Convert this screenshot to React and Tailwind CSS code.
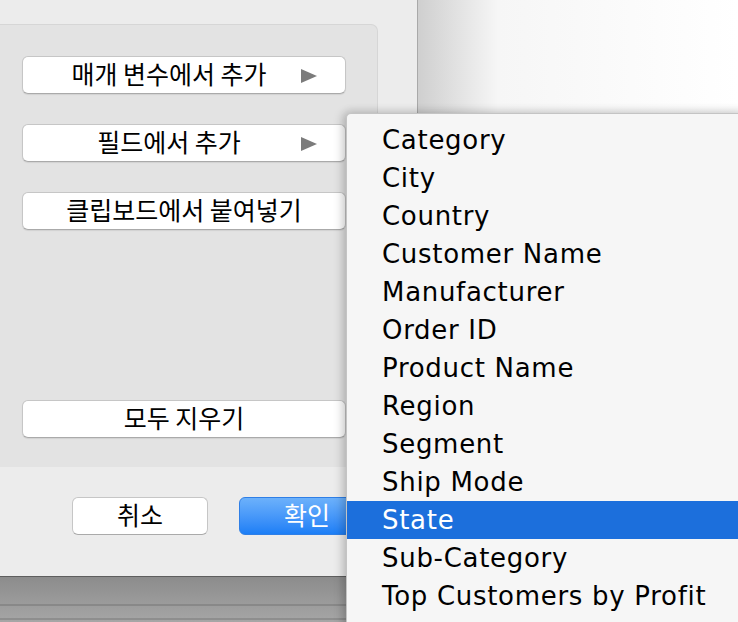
import React from "react";

const ko = { fontFamily: '"Noto Sans CJK KR", "Noto Sans", sans-serif' };
const menuFont = { fontFamily: '"DejaVu Sans", "Noto Sans", sans-serif' };

function Arrow() {
  return (
    <svg width="16" height="14" viewBox="0 0 16 14" className="absolute right-[28px] top-[12px]">
      <polygon points="0,0 16,7 0,14" fill="#7b7b7b" />
    </svg>
  );
}

function Btn({ label, arrow }) {
  return (
    <div className="relative h-[38px] w-[324px] rounded-[6px] border border-[#c6c6c6] border-b-[#aaaaaa] bg-white shadow-[0_1px_1px_rgba(0,0,0,0.08)] flex items-center">
      <div
        className={`text-[25px] leading-none text-black text-center pb-[3px] ${arrow ? "w-[292px]" : "w-full"}`}
        style={ko}
      >
        {label}
      </div>
      {arrow && <Arrow />}
    </div>
  );
}

const items = [
  "Category",
  "City",
  "Country",
  "Customer Name",
  "Manufacturer",
  "Order ID",
  "Product Name",
  "Region",
  "Segment",
  "Ship Mode",
  "State",
  "Sub-Category",
  "Top Customers by Profit",
];

export default function App() {
  return (
    <div className="relative w-[738px] h-[622px] overflow-hidden bg-white">
      <div className="flex h-[576px]">
        <div className="w-[418px] h-full bg-[#ececec] border-r border-[#a9a9a9] flex flex-col pt-[24px]">
          <div className="w-[378px] h-[443px] bg-[#e3e3e3] border-t border-r border-[#d6d6d6] rounded-tr-[7px] pl-[22px] pt-[31px] flex flex-col">
            <div className="flex flex-col gap-[30px]">
              <Btn label="매개 변수에서 추가" arrow />
              <Btn label="필드에서 추가" arrow />
              <Btn label="클립보드에서 붙여넣기" />
            </div>
            <div className="mt-[170px]">
              <Btn label="모두 지우기" />
            </div>
          </div>
          <div className="flex pl-[72px] pt-[30px] gap-[31px]">
            <div
              className="h-[38px] w-[136px] rounded-[6px] border border-[#c6c6c6] border-b-[#aaaaaa] bg-white flex items-center justify-center text-[25px] leading-none text-black pb-[3px]"
              style={ko}
            >
              취소
            </div>
            <div
              className="h-[38px] w-[136px] rounded-[6px] border border-[#2f7fe6] bg-gradient-to-b from-[#6cb1fb] to-[#1b7ef6] flex items-center justify-center text-[25px] leading-none text-white pb-[3px]"
              style={ko}
            >
              확인
            </div>
          </div>
        </div>
        <div className="flex-1 h-full bg-gradient-to-r from-[#cfcfcf] via-[#f6f6f6] via-[25%] to-white" />
      </div>
      <div className="h-[46px] border-t border-[#5e5e5e] bg-gradient-to-b from-[#8c8c8c] to-[#a6a6a6] flex flex-col">
        <div className="h-[27px]" />
        <div className="h-[2px] bg-[#888888]" />
        <div className="h-[12px]" />
        <div className="h-[2px] bg-[#8e8e8e]" />
      </div>

      <div
        className="absolute left-[346px] top-[113px] w-[400px] h-[520px] bg-[#f6f6f6] border-t border-l border-[#c4c4c4] rounded-tl-[5px] shadow-[-4px_0_10px_rgba(0,0,0,0.18),0_-3px_8px_rgba(0,0,0,0.08)] pt-[7px]"
        style={menuFont}
      >
        {items.map((it) => (
          <div
            key={it}
            className={`h-[38px] pl-[35px] flex items-center text-[26px] leading-none tracking-[0.7px] ${
              it === "State" ? "bg-[#1c6fdc] text-white" : "text-black"
            }`}
          >
            {it}
          </div>
        ))}
      </div>
    </div>
  );
}
